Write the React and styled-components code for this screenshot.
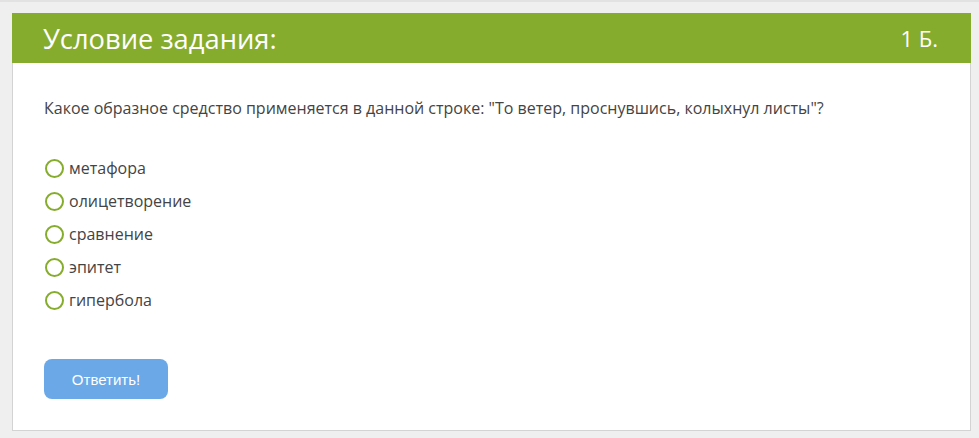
import React from 'react';
import styled, { createGlobalStyle } from 'styled-components';

const GlobalStyle = createGlobalStyle`
  html, body {
    margin: 0;
    padding: 0;
    background: #efefef;
  }
  body {
    font-family: "Open Sans", "Liberation Sans", sans-serif;
  }
`;

const Page = styled.div`
  border-top: 2px solid #e2e2e2;
  padding: 11px 8px 7px 12px;
`;

const Card = styled.div`
  background: #fff;
  border: 1px solid #d3d3d3;
  border-top: none;
`;

const Header = styled.div`
  display: flex;
  align-items: center;
  justify-content: space-between;
  height: 50px;
  background: #86ac2e;
  color: #fff;
  padding: 0 33px 0 31px;
  margin: 0 -1px;
`;

const Title = styled.h2`
  margin: 0;
  font-size: 27.3px;
  font-weight: 400;
`;

const Score = styled.span`
  font-size: 22px;
`;

const Body = styled.div`
  padding: 34px 31px 31px;
`;

const Question = styled.p`
  margin: 0 0 38px;
  font-size: 16px;
  line-height: 22px;
  color: #444;
`;

const Options = styled.div`
  display: flex;
  flex-direction: column;
  gap: 11px;
  margin-bottom: 48px;
`;

const Option = styled.label`
  display: flex;
  align-items: center;
  gap: 5px;
  height: 22px;
  font-size: 16px;
  color: #444;
  cursor: pointer;
`;

const Radio = styled.span`
  box-sizing: border-box;
  width: 19px;
  height: 19px;
  border-radius: 50%;
  border: 2px solid #86ac2e;
  margin-left: 1px;
`;

const Button = styled.button`
  display: block;
  width: 124px;
  height: 40px;
  border: none;
  border-radius: 8px;
  background: #6aa8e8;
  color: #fff;
  font-family: "Liberation Sans", Arial, sans-serif;
  font-size: 15px;
  cursor: pointer;
`;

const options = ['метафора', 'олицетворение', 'сравнение', 'эпитет', 'гипербола'];

export default function App() {
  return (
    <>
      <GlobalStyle />
      <Page>
        <Card>
          <Header>
            <Title>Условие задания:</Title>
            <Score>1 Б.</Score>
          </Header>
          <Body>
            <Question>
              Какое образное средство применяется в данной строке: "То ветер, проснувшись, колыхнул листы"?
            </Question>
            <Options>
              {options.map((o) => (
                <Option key={o}>
                  <Radio />
                  {o}
                </Option>
              ))}
            </Options>
            <Button>Ответить!</Button>
          </Body>
        </Card>
      </Page>
    </>
  );
}
